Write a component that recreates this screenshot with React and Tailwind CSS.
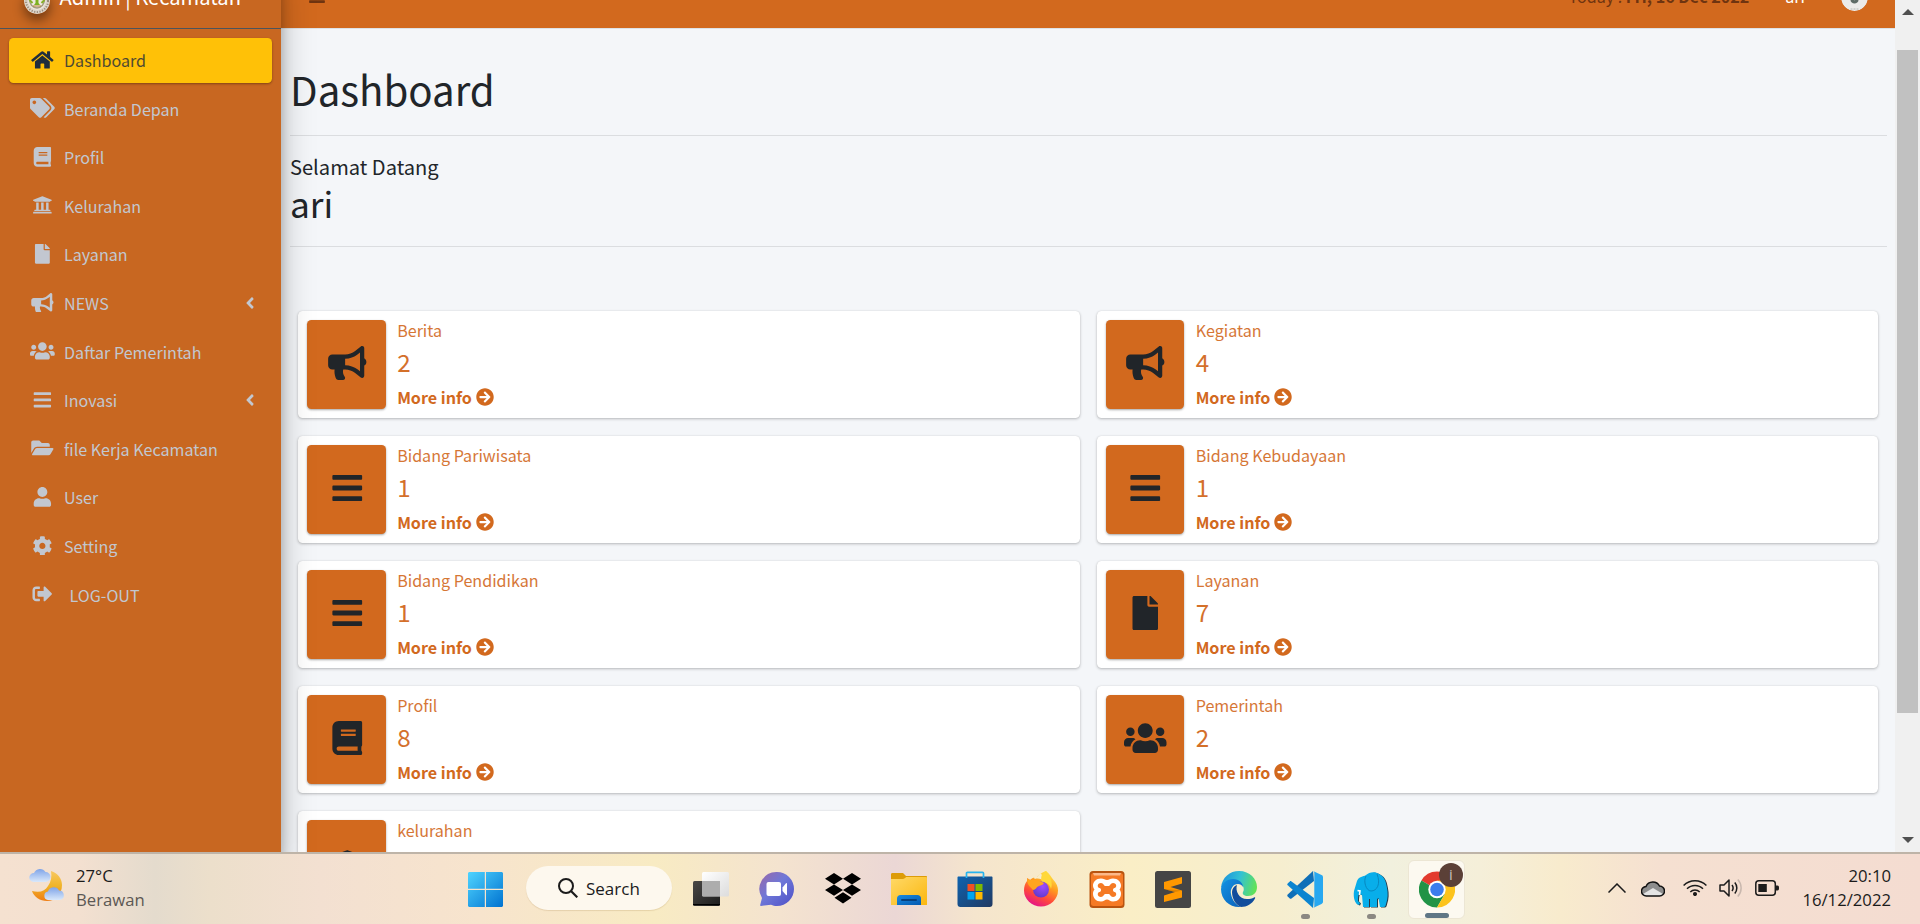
import React from "react";
import {
  FaHome, FaTags, FaBook, FaUniversity, FaFile, FaBullhorn, FaUsers, FaBars,
  FaFolderOpen, FaUser, FaCog, FaSignOutAlt, FaAngleLeft, FaArrowCircleRight,
} from "react-icons/fa";

const NAV = [
  { label: "Dashboard", icon: FaHome, active: true },
  { label: "Beranda Depan", icon: FaTags },
  { label: "Profil", icon: FaBook },
  { label: "Kelurahan", icon: FaUniversity },
  { label: "Layanan", icon: FaFile },
  { label: "NEWS", icon: FaBullhorn, tree: true },
  { label: "Daftar Pemerintah", icon: FaUsers },
  { label: "Inovasi", icon: FaBars, tree: true },
  { label: "file Kerja Kecamatan", icon: FaFolderOpen },
  { label: "User", icon: FaUser },
  { label: "Setting", icon: FaCog },
  { label: "LOG-OUT", icon: FaSignOutAlt, indent: true },
];

const CARDS = [
  { label: "Berita", value: 2, icon: FaBullhorn },
  { label: "Kegiatan", value: 4, icon: FaBullhorn },
  { label: "Bidang Pariwisata", value: 1, icon: FaBars },
  { label: "Bidang Kebudayaan", value: 1, icon: FaBars },
  { label: "Bidang Pendidikan", value: 1, icon: FaBars },
  { label: "Layanan", value: 7, icon: FaFile },
  { label: "Profil", value: 8, icon: FaBook },
  { label: "Pemerintah", value: 2, icon: FaUsers },
  { label: "kelurahan", value: 6, icon: FaUniversity, lowered: true },
];

function Crest() {
  return (
    <svg viewBox="0 0 26 26" className="h-[26px] w-[26px] rounded-full shadow-[0_6px_12px_rgba(0,0,0,0.45)]">
      <circle cx="13" cy="13" r="13" fill="#ddd5ca" />
      <circle cx="13" cy="13" r="11" fill="none" stroke="#9a8c7c" strokeWidth="2" strokeDasharray="1.200 1.500" />
      <circle cx="13" cy="13" r="8.800" fill="#efe9de" />
      <path d="M5.500 11c0 5 3 8.500 7.500 9 4.500-.5 7.500-4 7.500-9" fill="none" stroke="#a39a80" strokeWidth="1.500" />
      <path d="M5.500 12l3 3M20.500 12l-3 3" stroke="#86b02a" strokeWidth="2" />
      <path d="M11.500 8h3v7l1.500 2h-6l1.500-2z" fill="#7cb020" />
      <path d="M9 18h8" stroke="#b8863a" strokeWidth="1.200" />
    </svg>
  );
}

function Avatar() {
  return (
    <svg viewBox="0 0 27 27" className="h-[27px] w-[27px] rounded-full">
      <circle cx="13.500" cy="13.500" r="13.500" fill="#ebebea" />
      <path d="M9.500 9h8v7c0 2-2 3.500-4 3.500s-4-1.500-4-3.500z" fill="#5d6b66" />
      <path d="M12 11h3v4.500l-1.500 1-1.500-1z" fill="#a9b1ae" />
      <path d="M9.500 25h8" stroke="#b4b8b6" strokeWidth="1" strokeDasharray="2 1" />
    </svg>
  );
}

function Sidebar() {
  return (
    <aside className="relative z-10 flex w-[281px] shrink-0 flex-col bg-[#c86721] shadow-[0_16px_32px_rgba(0,0,0,0.25),0_11px_11px_rgba(0,0,0,0.22)]">
      <div className="flex h-[65px] items-center border-b border-[#4b545c] pl-6 text-[20.150px] text-white">
        <div className="mt-[9px]"><Crest /></div>
        <span className="ml-[9.500px] mt-[1px] whitespace-nowrap leading-[34px]">Admin | Kecamatan</span>
      </div>
      <nav className="flex flex-col gap-[3.610px] px-[9px] pt-[9px]">
        {NAV.map(({ label, icon: Icon, active, tree, indent }) => (
          <a
            key={label}
            className={
              active
                ? "flex h-[45px] items-center rounded-[4.500px] bg-[#ffc107] pl-[19px] pr-[18px] text-[#1f2d3d] shadow-[0_1px_3px_rgba(0,0,0,0.12),0_1px_2px_rgba(0,0,0,0.24)]"
                : "flex h-[45px] items-center pl-[19px] pr-[18px] text-[#c2c7d0]"
            }
          >
            <span className="-mt-[2px] flex w-[29px] justify-center">
              <Icon className="h-[19.800px] w-[24.750px]" />
            </span>
            <span className={indent ? "ml-[12.500px] leading-[27px]" : active ? "ml-[7px] leading-[27px] opacity-80" : "ml-[7px] leading-[27px]"}>{label}</span>
            {tree && <FaAngleLeft className="-mr-[5px] -mt-[2px] ml-auto h-[18px] w-[18px]" />}
          </a>
        ))}
      </nav>
    </aside>
  );
}

function InfoBox({ label, value, icon: Icon, lowered }) {
  return (
    <div className="flex h-[107px] rounded-[4.500px] bg-white p-[9px] shadow-[0_0_1px_rgba(0,0,0,0.13),0_1px_3px_rgba(0,0,0,0.25)]">
      <div className="flex w-[78.750px] shrink-0 items-center justify-center rounded-[4.500px] bg-[#d2691e] pl-px text-[#212529] shadow-[0_1px_3px_rgba(0,0,0,0.12),0_1px_2px_rgba(0,0,0,0.24)]">
        <Icon className={lowered ? "mt-px h-[34px] w-[42.500px]" : "-mt-[3px] h-[34px] w-[42.500px]"} />
      </div>
      <div className="-mt-[3px] flex flex-col pl-[11.400px] text-[#d2691e]">
        <span className="leading-[27px] opacity-90">{label}</span>
        <span className="text-[24.200px] leading-9 opacity-95">{value}</span>
        <span className="mt-1 flex items-center gap-1 font-bold leading-[27px]">
          More info
          <FaArrowCircleRight className="-mt-[1px] h-[18px] w-[18px]" />
        </span>
      </div>
    </div>
  );
}

function Scrollbar() {
  return (
    <div className="flex w-[25px] shrink-0 flex-col items-center justify-between bg-[#f0f0f0] pb-[9px] pt-[9px]">
      <svg viewBox="0 0 12 6" className="h-[6px] w-3"><path d="M6 0l6 6H0z" fill="#505050" /></svg>
      <div className="mb-auto mt-[35px] h-[663px] w-[21px] bg-[#c1c1c1]" />
      <svg viewBox="0 0 12 6" className="h-[6px] w-3"><path d="M0 0h12L6 6z" fill="#505050" /></svg>
    </div>
  );
}

function Weather() {
  return (
    <svg viewBox="0 0 36 34" className="h-[34px] w-9">
      <defs>
        <linearGradient id="moon" x1="0" y1="0" x2="0" y2="1"><stop stopColor="#f8c860" /><stop offset=".5" stopColor="#f0b429" /><stop offset="1" stopColor="#ef7d14" /></linearGradient>
        <linearGradient id="cloud" x1="0" y1="0" x2="0" y2="1"><stop stopColor="#7fa4e8" /><stop offset="1" stopColor="#d9e8fb" /></linearGradient>
      </defs>
      <path d="M22 3c7 2 11 8 11 14 0 10-7 16-15 16-7 0-13-4-15-10 8 2 13 0 16-5 3-4 4-9 3-15z" fill="url(#moon)" />
      <path d="M4.500 14A4.500 4.500 0 0 1 5 5 6.500 6.500 0 0 1 16.500 4a5 5 0 0 1 0 10z" fill="url(#cloud)" />
      <path d="M19 32a4.300 4.300 0 0 1 0-8.500 6 6 0 0 1 11-1 4.800 4.800 0 0 1 1 9.500z" fill="url(#cloud)" />
    </svg>
  );
}

const APPS = [
  {
    name: "taskview",
    art: (
      <>
        <defs>
          <linearGradient id="tvd" x1="0" y1="0" x2="1" y2="1"><stop stopColor="#4a4846" /><stop offset="1" stopColor="#1c1c1c" /></linearGradient>
          <linearGradient id="tvl" x1="0" y1="0" x2="1" y2="1"><stop stopColor="#ffffff" /><stop offset="1" stopColor="#dcdcdc" /></linearGradient>
        </defs>
        <rect x="0" y="10" width="27" height="25" rx="1.500" fill="url(#tvd)" />
        <path d="M0 33.500h27" stroke="#000" strokeWidth="1" />
        <rect x="9" y="1" width="27" height="24.500" rx="1.500" fill="url(#tvl)" />
        <path d="M9 10h18v15H9z" fill="#adadad" />
      </>
    ),
  },
  {
    name: "chat",
    art: (
      <>
        <defs><linearGradient id="cht" x1="0" y1="0" x2="1" y2="1"><stop stopColor="#9a68a8" /><stop offset=".45" stopColor="#6f78d8" /><stop offset="1" stopColor="#4d4fc6" /></linearGradient></defs>
        <path d="M18 1a17 17 0 1 1 0 34c-2.500 0-4-.5-6-1.300L2 35c-1 0-1-.8-.7-1.500L3 27A17 17 0 0 1 18 1z" fill="url(#cht)" />
        <rect x="7.500" y="11" width="14.500" height="14" rx="2" fill="#fff" />
        <path d="M23.500 16.500l3.500-4.300c.5-.4 1-.2 1 .4v11c0 .6-.5.800-1 .3l-3.500-4z" fill="#fff" />
      </>
    ),
  },
  {
    name: "dropbox",
    art: <path d="M9 2l9 5.700-9 5.700-9-5.700zM27 2l9 5.700-9 5.700-9-5.700zM9 13.400l9 5.700-9 5.700-9-5.700zM27 13.400l9 5.700-9 5.700-9-5.700zM18 21.300l8.500 5.500L18 32.500l-8.500-5.700z" fill="#000" />,
  },
  {
    name: "explorer",
    art: (
      <>
        <defs>
          <linearGradient id="fld" x1="0" y1="0" x2="1" y2="1"><stop stopColor="#ffd967" /><stop offset="1" stopColor="#fbb70f" /></linearGradient>
          <linearGradient id="flb" x1="0" y1="0" x2="1" y2="1"><stop stopColor="#1a8be0" /><stop offset="1" stopColor="#0459b0" /></linearGradient>
        </defs>
        <path d="M0 3.500C0 2.500.500 2 1.500 2H11c1 0 1.500.300 2 1l2 2h20c.6 0 1 .4 1 1v6H0z" fill="#dd9c08" />
        <path d="M0 8h11c1.500 0 2-.3 3-1l1.300-1H35c.6 0 1 .4 1 1v27H0z" fill="url(#fld)" />
        <path d="M6 34v-6.500c0-2 1.500-3.500 3.500-3.500h17c2 0 3.500 1.500 3.500 3.500V34z" fill="url(#flb)" />
        <path d="M11 29h14" stroke="#06417f" strokeWidth="2" strokeLinecap="round" />
      </>
    ),
  },
  {
    name: "store",
    art: (
      <>
        <defs><linearGradient id="sto" x1="0" y1="0" x2="1" y2="1"><stop stopColor="#0d63b0" /><stop offset="1" stopColor="#223a62" /></linearGradient></defs>
        <path d="M1.500 5.500h33c.6 0 1 .4 1 1V33a3 3 0 0 1-3 3h-29a3 3 0 0 1-3-3V6.500c0-.6.400-1 1-1z" fill="url(#sto)" />
        <path d="M9.500 7V2.300c0-.7.300-1 1-1h15c.7 0 1 .3 1 1V7" fill="none" stroke="#27b3ee" strokeWidth="1.700" />
        <path d="M10.500 13h7v7h-7z" fill="#f25022" /><path d="M18.500 13h7v7h-7z" fill="#7fba00" />
        <path d="M10.500 21h7v7.500h-7z" fill="#00a4ef" /><path d="M18.500 21h7v7.500h-7z" fill="#ffb900" />
      </>
    ),
  },
  {
    name: "firefox",
    art: (
      <>
        <defs>
          <linearGradient id="ffx" x1=".8" y1="0" x2=".3" y2="1"><stop stopColor="#fff14d" /><stop offset=".4" stopColor="#ff9a1f" /><stop offset=".7" stopColor="#ff4a3a" /><stop offset="1" stopColor="#e3108c" /></linearGradient>
          <radialGradient id="ffp" cx=".6" cy=".3" r=".8"><stop stopColor="#a04bff" /><stop offset="1" stopColor="#5b39c4" /></radialGradient>
        </defs>
        <path d="M23 0c4 3 5 6 7.500 9 3 3 4.500 7 4.500 10.500A17 16 0 0 1 18 35.500 17 16 0 0 1 1 19.500c0-4 1-7 3-9.500V7c1.500.5 2 1.500 3 2 2-2 4-3 7-3 2-3 6-5 9-6z" fill="url(#ffx)" />
        <path d="M8 5c2 1 3 2 4 3 3-1 7 0 9 2l-3-8c-2 1-3 3-4 4-3 0-4 .5-6 1z" fill="#f6ebcb" />
        <path d="M23 0c-4 2-6 6-4 11 4 0 8 2 9 7 2-6 0-12-5-18z" fill="#ffd83a" />
        <circle cx="18" cy="18.500" r="8" fill="url(#ffp)" />
        <path d="M4 8c3 1 5 1 9 1 3 0 5 2 8 3-1 2-3 2-5 3-3 1-3 4-6 4-2-3-6-4-6-11z" fill="#ffa51f" />
      </>
    ),
  },
  {
    name: "xampp",
    art: (
      <>
        <rect x=".5" y="0" width="35" height="37" rx="3.500" fill="#b95410" />
        <rect x="2" y="2" width="32" height="33" rx="2.500" fill="#f57a25" />
        <path d="M4 2h28l-1 2.500H5z" fill="#fbb98a" />
        <path d="M12 7.500c3 0 4 1.500 6 1.500s3-1.500 6-1.500c5 0 8 3.500 8 7 0 1.800-.7 3-1.500 4 .8 1 1.500 2.200 1.500 4 0 4.500-3 8-8 8-3 0-4-2-6-2s-3 2-6 2c-5 0-8-3.500-8-8 0-1.800.7-3 1.500-4-.8-1-1.500-2.200-1.500-4 0-3.500 3-7 8-7z" fill="#fff" />
        <path d="M12 12c2.500 0 3 3 4 3h4c1 0 1.500-3 4-3 4 0 4 4.500 1.500 5-2 .5-2 3.500 0 4 2.500.5 2.500 5-1.500 5-2.500 0-3-3-4-3h-4c-1 0-1.500 3-4 3-4 0-4-4.500-1.500-5 2-.5 2-3.500 0-4C8 16.500 8 12 12 12z" fill="#f57a25" />
      </>
    ),
  },
  {
    name: "sublime",
    art: (
      <>
        <rect width="36" height="37" rx="2.500" fill="#454545" />
        <path d="M27 6v6.500L15.500 16 27 19.500v7L9 31v-6.500l11-3.500L9 18v-7z" fill="#ff9800" />
        <path d="M9 18l18 1.500-7 1.500z" fill="#b96b00" opacity=".45" />
      </>
    ),
  },
  {
    name: "edge",
    art: (
      <>
        <defs>
          <linearGradient id="edt" x1="0" y1=".3" x2="1" y2=".5"><stop stopColor="#1c93dd" /><stop offset=".5" stopColor="#33c1d4" /><stop offset="1" stopColor="#62e257" /></linearGradient>
          <linearGradient id="edb" x1="0" y1="0" x2="1" y2="1"><stop stopColor="#1293e4" /><stop offset="1" stopColor="#0b5fb8" /></linearGradient>
        </defs>
        <path d="M0 17C1 6 9 0 18 0c11 0 18 8 18 16 0 6-4 9-9 9-4 0-6-2-5-4 2-3 0-9-6-9C8 12 1 15 0 17z" fill="url(#edt)" />
        <path d="M0 18c1-6 6-10 12-10 6 0 10 4 10 8-1-2-3-3-5-3-5 0-8 5-7 10 1 6 5 11 10 13C9 37 0 29 0 18z" fill="url(#edb)" />
        <path d="M11 21c0-3 2-6 5-7-2 6 2 14 10 14 3 0 5-.5 7-1.500 1-.5 1.500.200 1 1C31 33 26 36 20 36c-5-2-9-8-9-15z" fill="#124d9c" />
      </>
    ),
  },
  {
    name: "vscode",
    running: true,
    art: (
      <>
        <path d="M26 0L27 10 4.500 27.500c-.6.400-1.200.4-1.700 0L.700 25.500c-.6-.6-.6-1.300 0-1.900z" fill="#0f6fb8" />
        <path d="M.700 12.400l2.100-2c.5-.4 1.100-.4 1.700 0L27 27l-1 10L.7 14.300c-.6-.6-.6-1.300 0-1.900z" fill="#0b84d0" />
        <path d="M26 0l8.500 4c.9.400 1.500 1.200 1.500 2.200v24.600c0 1-.6 1.800-1.500 2.200L26 37c1-.5 1.300-1 1.300-2V2c0-1-.3-1.500-1.300-2z" fill="#28a8f0" />
      </>
    ),
  },
  {
    name: "mysql",
    running: true,
    art: (
      <>
        <path d="M4 10C6 5 10 6 13 4c3-3 9-4 13-1 6 3 7 8 8 14 1 5 1 10-1 16-.3 2-1 3-2 3h-4l-1.500-9-1.500 1v8h-7v-8h-1v8h-6l-1-12-3-1c-1 2-1 4-1 7l2 2-1 2C2 33 0 27 1 20z" fill="#263a4a" transform="translate(1 .6)" />
        <path d="M4 10C6 5 10 6 13 4c3-3 9-4 13-1 6 3 7 8 8 14 1 5 1 10-1 16-.3 2-1 3-2 3h-4l-1.500-9-1.500 1v8h-7v-8h-1v8h-6l-1-12-3-1c-1 2-1 4-1 7l2 2-1 2C2 33 0 27 1 20z" fill="#08aeea" />
        <path d="M13 5c-3 5 0 15 5 15 6 0 10-7 6-17" fill="none" stroke="#0788c0" strokeWidth="1" />
        <path d="M4.500 19.500l2.500.5-.5 4" fill="none" stroke="#fff" strokeWidth="1.600" />
      </>
    ),
  },
];

function Chrome() {
  return (
    <div className="relative -ml-px flex h-[59px] w-[57px] items-center justify-center rounded-md border border-[#ece6d4] bg-[#fcf9f0]">
      <svg viewBox="0 0 36 36" className="h-[37px] w-9">
        <path d="M18 18L2.400 9A18 18 0 0 1 33.600 9z" fill="#e33b2e" />
        <path d="M18 18L2.400 9A18 18 0 0 0 18 36l7.800-13.500z" fill="#219346" />
        <path d="M18 9h15.600A18 18 0 0 1 18 36l7.800-13.500z" fill="#fcc31c" />
        <circle cx="18" cy="18" r="8.700" fill="#fff" />
        <circle cx="18" cy="18" r="6.800" fill="#3b7ded" />
      </svg>
      <span className="absolute right-[1px] top-[2px] flex h-6 w-6 items-center justify-center rounded-full bg-[#5b4037] text-[15px] leading-none text-[#c9bfba]">i</span>
      <span className="absolute bottom-0 left-4 h-[5px] w-6 rounded-full bg-[#5f7685]" />
    </div>
  );
}

function Taskbar() {
  return (
    <footer className="flex h-[72px] items-stretch border-t-2 border-[#beb4a8] bg-[linear-gradient(90deg,#f5e1d0_0px,#f3e0d0_80px,#e4dbcd_155px,#ecdfcb_210px,#f3e0d1_320px,#f7e4cd_480px,#f8ebc3_655px,#f4e3cf_780px,#ebd7d5_895px,#f5e5cd_975px,#faeec6_1130px,#f6eecf_1280px,#f1f0de_1390px,#f5efd9_1480px,#f8ebcd_1560px,#f5e0d1_1660px,#f4dcd1_1920px)] font-['Open_Sans',sans-serif] text-[16.700px] text-[#1b1b1b]">
      <div className="flex w-[452px] items-start pl-[29px] pt-[13px]">
        <div className="mt-[1px]"><Weather /></div>
        <div className="-mt-[3px] ml-[11px] flex flex-col leading-6">
          <span>27°C</span>
          <span className="text-[#5c5854]">Berawan</span>
        </div>
      </div>
      <div className="flex items-center">
        <div className="flex w-[66px] justify-center">
          <svg viewBox="0 0 35 35" className="h-[35px] w-[35px]">
            <defs><linearGradient id="win" gradientUnits="userSpaceOnUse" x1="0" y1="0" x2="35" y2="35"><stop stopColor="#4fd4ff" /><stop offset="1" stopColor="#0072d0" /></linearGradient></defs>
            <path d="M1 0h15.800v16.800H0V1zM18 0h16l1 1v15.800H18zM0 18h16.800v17H1l-1-1zM18 18h17v16l-1 1H18z" fill="url(#win)" />
          </svg>
        </div>
        <div className="-mt-[2px] ml-2 mr-[6px] flex h-11 w-[146px] items-center rounded-full bg-[#fdf8ee] pl-8 shadow-[0_1px_1px_rgba(160,120,60,0.2)]">
          <svg viewBox="0 0 20 20" className="h-5 w-5"><circle cx="8" cy="8" r="7" fill="none" stroke="#1b1b1b" strokeWidth="2" /><path d="M13 13l6.300 6.300" stroke="#1b1b1b" strokeWidth="2.200" /></svg>
          <span className="ml-2 mt-[1px] text-[17px] leading-6">Search</span>
        </div>
        {APPS.map(({ name, art, running }) => (
          <div key={name} className="relative flex w-[66px] justify-center">
            <svg viewBox="0 0 36 37" className="h-[37px] w-9">{art}</svg>
            {running && <span className="absolute -bottom-[11px] h-[5px] w-[9px] rounded-full bg-[#8b8882]" />}
          </div>
        ))}
        <div className="flex w-[66px] justify-center"><Chrome /></div>
      </div>
      <div className="ml-auto flex items-center pr-[29px]">
        <svg viewBox="0 0 18 10" className="-mt-[3px] h-[10px] w-[18px]"><path d="M.5 9.500L9 1l8.500 8.500" fill="none" stroke="#1b1b1b" strokeWidth="1.500" /></svg>
        <svg viewBox="0 0 24 17" className="-mt-[2px] ml-[15px] h-[17px] w-6">
          <path d="M5.500 16A4.700 4.700 0 0 1 5 6.500 7.500 7.500 0 0 1 18.500 6 5 5 0 0 1 18.500 16z" fill="#8d8d8d" />
          <path d="M2 14l10-6 10 6-3 2H5z" fill="#e4e4e4" />
          <path d="M5.500 16A4.700 4.700 0 0 1 5 6.500 7.500 7.500 0 0 1 18.500 6 5 5 0 0 1 18.500 16z" fill="none" stroke="#111" strokeWidth="1.500" />
        </svg>
        <svg viewBox="0 0 24 17" className="-mt-[3px] ml-[18px] h-[17px] w-6" fill="none" stroke="#1b1b1b" strokeWidth="1.500">
          <path d="M.600 6.500a16 16 0 0 1 22.800 0M4 9.800a11.300 11.300 0 0 1 16 0M7.300 13a6.600 6.600 0 0 1 9.400 0" />
          <circle cx="12" cy="15" r="1.300" fill="#1b1b1b" />
        </svg>
        <svg viewBox="0 0 24 20" className="-mt-[2px] ml-3 h-5 w-6" fill="none" stroke="#1b1b1b" strokeWidth="1.500" strokeLinejoin="round">
          <path d="M1 7h4l5-5v16l-5-5H1z" />
          <path d="M13 7a5 5 0 0 1 0 6M15.800 4.500a8.500 8.500 0 0 1 0 11" />
          <path d="M18.800 1.500a12.500 12.500 0 0 1 0 17" stroke="#c9b8ae" />
        </svg>
        <svg viewBox="0 0 24 16" className="-mt-[2px] ml-3 h-4 w-6">
          <rect x=".8" y=".8" width="19.500" height="14.400" rx="3" fill="none" stroke="#1b1b1b" strokeWidth="1.500" />
          <rect x="3.300" y="4" width="8.500" height="8" fill="#1b1b1b" />
          <path d="M21 5.500h1.500c1 0 1.500.8 1.500 2.500s-.5 2.500-1.500 2.500H21z" fill="#1b1b1b" />
        </svg>
        <div className="-mt-[3px] flex w-28 flex-col text-right leading-6">
          <span>20:10</span>
          <span>16/12/2022</span>
        </div>
      </div>
    </footer>
  );
}

export default function App() {
  return (
    <div className="flex h-[924px] w-[1920px] flex-col overflow-hidden bg-[#f4f6f9] font-['Noto_Sans_CJK_JP',sans-serif] text-[16.100px] text-[#212529]">
      <div className="flex h-[852px] overflow-hidden">
        <div className="-mt-9 flex h-[888px] min-w-0 flex-1">
          <Sidebar />
          <div className="flex min-w-0 flex-1 flex-col">
            <header className="flex h-[65px] shrink-0 items-center border-b border-[#dee2e6] bg-[#d2691e] pl-[27px] pr-[27px] text-[#6f3410]">
              <FaBars className="h-[18px] w-[18px]" />
              <span className="ml-auto whitespace-nowrap leading-[27px]">Today : <b>Fri, 16 Dec 2022</b></span>
              <span className="ml-[36px] leading-[27px] text-white">ari</span>
              <div className="ml-[36px] mt-[3px]"><Avatar /></div>
            </header>
            <main className="flex flex-col pl-[9px] pr-2">
              <h1 className="mt-[33px] text-[40.200px] leading-[54px]">Dashboard</h1>
              <hr className="mt-[19px] border-t border-[#dbdde0]" />
              <p className="mt-[17px] text-[20.100px] leading-[27px]">Selamat Datang</p>
              <p className="mt-px text-[35.300px] leading-[43px]">ari</p>
              <hr className="mt-[22px] border-t border-[#dbdde0]" />
              <section className="mt-16 grid grid-cols-2 gap-x-[17px] gap-y-[18px] pl-2 pr-[9px]">
                {CARDS.map((card) => <InfoBox key={card.label} {...card} />)}
              </section>
            </main>
          </div>
        </div>
        <Scrollbar />
      </div>
      <Taskbar />
    </div>
  );
}
